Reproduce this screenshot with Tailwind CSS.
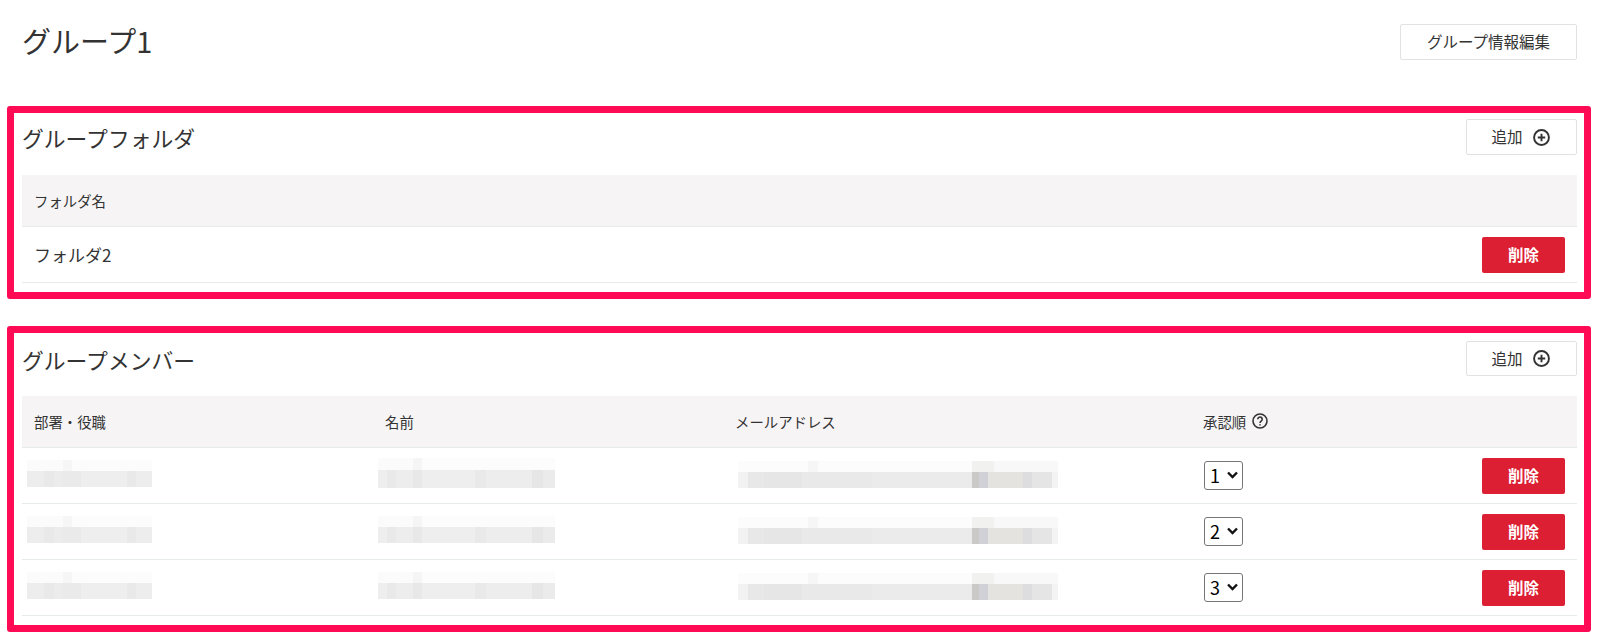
<!DOCTYPE html>
<html lang="ja">
<head>
<meta charset="UTF-8">
<meta name="viewport" content="width=device-width, initial-scale=1.0">
<title>グループ1</title>
<script src="https://cdn.jsdelivr.net/npm/@tailwindcss/browser@4"></script>
</head>
<body class="bg-white text-[#333] font-['Noto_Sans_CJK_JP','Noto_Sans',sans-serif]">

<div class="w-[1600px] h-[641px] overflow-hidden pl-[7px] pr-[9px] pt-[24px]">
  <!-- page title -->
  <div class="flex justify-between items-start pl-[15px] pr-[14px] h-[82px]">
    <h1 class="text-[29px] leading-[36px] -mt-[2px]">グループ1</h1>
    <button class="w-[177px] h-[36px] bg-white border border-[#e0e2e3] rounded-[2px] text-[15.5px] leading-none">グループ情報編集</button>
  </div>

  <!-- group folder -->
  <section class="h-[193px] border-[7px] border-[#ff0a54] rounded-[3px] pl-[8px] pr-[7px] pt-[6px]">
    <div class="flex justify-between items-center h-[36px] mb-[20px]">
      <h2 class="text-[21.8px] pt-[3px]">グループフォルダ</h2>
      <button class="w-[111px] h-[36px] flex items-center justify-center gap-[10px] pr-[2px] bg-white border border-[#e0e2e3] rounded-[2px] text-[15.5px]">
        追加
        <svg class="w-[17px] h-[17px]" viewBox="0 0 16 16" fill="none" stroke="#333" stroke-width="1.8"><circle cx="8" cy="8" r="7"/><path d="M8 4.5v7M4.5 8h7"/></svg>
      </button>
    </div>
    <div class="h-[52px] bg-[#f6f4f5] border-b border-[#e6eaea] flex items-center px-[12px] text-[14.4px]">フォルダ名</div>
    <div class="h-[56px] border-b border-[#e6eaea] flex items-center justify-between pl-[12px] pr-[12px] text-[17px]">
      <span>フォルダ2</span>
      <button class="w-[83px] h-[36px] bg-[#dc1f32] rounded-[2px] text-white text-[15.5px] font-bold">削除</button>
    </div>
  </section>

  <!-- group members -->
  <section class="mt-[27px] h-[306px] border-[7px] border-[#ff0a54] rounded-[3px] pl-[8px] pr-[7px] pt-[8px]">
    <div class="flex justify-between items-center h-[35px] mb-[20px]">
      <h2 class="text-[21.8px] pt-[3px]">グループメンバー</h2>
      <button class="w-[111px] h-[35px] flex items-center justify-center gap-[10px] pr-[2px] bg-white border border-[#e0e2e3] rounded-[2px] text-[15.5px]">
        追加
        <svg class="w-[17px] h-[17px]" viewBox="0 0 16 16" fill="none" stroke="#333" stroke-width="1.8"><circle cx="8" cy="8" r="7"/><path d="M8 4.5v7M4.5 8h7"/></svg>
      </button>
    </div>

    <div class="h-[52px] bg-[#f6f4f5] border-b border-[#e6eaea] grid grid-cols-[351px_350px_468px_1fr] items-center text-[14.4px]">
      <div class="pl-[12px]">部署・役職</div>
      <div class="pl-[12px]">名前</div>
      <div class="pl-[12px]">メールアドレス</div>
      <div class="pl-[12px] flex items-center gap-[6px]">
        承認順
        <svg class="w-[16px] h-[16px]" viewBox="0 0 16 16" fill="none" stroke="#333" stroke-width="1.6"><circle cx="8" cy="8" r="7"/><path d="M5.8 6.3a2.2 2.2 0 1 1 3.4 1.8c-.8.5-1.2.9-1.2 1.8"/><path d="M8 11.2v1.3"/></svg>
      </div>
    </div>

    <div class="h-[56px] border-b border-[#e6eaea] grid grid-cols-[351px_350px_468px_1fr] items-center">
      <div class="pl-[5px] pb-[5px]">
        <div class="w-[125px] h-[11px] bg-[linear-gradient(90deg,#fbfbfb_0_29%,#f6f6f6_29%_36%,#fcfcfc_36%)]"></div>
        <div class="w-[125px] h-[16px] bg-[linear-gradient(90deg,#ededed_0_14%,#e9e9e9_14%_22%,#ececec_22%_29%,#eaeaea_29%_43%,#eeeeee_43%_80%,#e9e9e9_80%_87%,#ededed_87%)]"></div>
      </div>
      <div class="pl-[5px] pb-[5px]">
        <div class="w-[177px] h-[12px] bg-[linear-gradient(90deg,#fbfbfb_0_20%,#f5f5f5_20%_25%,#fcfcfc_25%)]"></div>
        <div class="w-[177px] h-[18px] bg-[linear-gradient(90deg,#eeeeee_0_5%,#e9e9e9_5%_10%,#ededed_10%_20%,#e8e8e8_20%_25%,#eeeeee_25%_55%,#e9e9e9_55%_61%,#ededed_61%_87%,#e6e6e6_87%_93%,#ebebeb_93%)]"></div>
      </div>
      <div class="ml-[15px] pb-[3px]">
        <div class="w-[320px] h-[11px] bg-[linear-gradient(90deg,#fcfcfc_0_22%,#f6f6f6_22%_25%,#fcfcfc_25%_73%,#f1f1f0_73%_80%,#f8f8f8_80%)]"></div>
        <div class="w-[320px] h-[16px] bg-[linear-gradient(90deg,#f2f2f2_0_3%,#e8e8e8_3%_8%,#e6e6e6_8%_20%,#e9e9e9_20%_42%,#ebebeb_42%_73%,#cbc9c7_73%_75.4%,#d0d1d6_75.4%_78%,#e5e3e0_78%_89%,#dddde0_89%_92%,#e5e5e5_92%_98%,#f3f3f3_98%)]"></div>
      </div>
      <div class="flex items-center justify-between pl-[13px] pr-[12px]">
        <div class="relative w-[39px] h-[29px]">
          <select class="appearance-none w-full h-full border border-[#767676] rounded-[3px] text-[18px] pl-[5px] text-black"><option>1</option><option>2</option><option>3</option></select>
          <svg class="absolute right-[5px] top-[10px] w-[11px] h-[8px] pointer-events-none" viewBox="0 0 11 8" fill="none" stroke="#111" stroke-width="2.4"><path d="M1 1.5l4.5 4.5L10 1.5"/></svg>
        </div>
        <button class="w-[83px] h-[36px] bg-[#dc1f32] rounded-[2px] text-white text-[15.5px] font-bold">削除</button>
      </div>
    </div>

    <div class="h-[56px] border-b border-[#e6eaea] grid grid-cols-[351px_350px_468px_1fr] items-center">
      <div class="pl-[5px] pb-[5px]">
        <div class="w-[125px] h-[11px] bg-[linear-gradient(90deg,#fbfbfb_0_29%,#f6f6f6_29%_36%,#fcfcfc_36%)]"></div>
        <div class="w-[125px] h-[16px] bg-[linear-gradient(90deg,#ededed_0_14%,#e9e9e9_14%_22%,#ececec_22%_29%,#eaeaea_29%_43%,#eeeeee_43%_80%,#e9e9e9_80%_87%,#ededed_87%)]"></div>
      </div>
      <div class="pl-[5px] pb-[5px]">
        <div class="w-[177px] h-[11px] bg-[linear-gradient(90deg,#fbfbfb_0_20%,#f5f5f5_20%_25%,#fcfcfc_25%)]"></div>
        <div class="w-[177px] h-[16px] bg-[linear-gradient(90deg,#eeeeee_0_5%,#e9e9e9_5%_10%,#ededed_10%_20%,#e8e8e8_20%_25%,#eeeeee_25%_55%,#e9e9e9_55%_61%,#ededed_61%_87%,#e6e6e6_87%_93%,#ebebeb_93%)]"></div>
      </div>
      <div class="ml-[15px] pb-[3px]">
        <div class="w-[320px] h-[11px] bg-[linear-gradient(90deg,#fcfcfc_0_22%,#f6f6f6_22%_25%,#fcfcfc_25%_73%,#f1f1f0_73%_80%,#f8f8f8_80%)]"></div>
        <div class="w-[320px] h-[16px] bg-[linear-gradient(90deg,#f2f2f2_0_3%,#e8e8e8_3%_8%,#e6e6e6_8%_20%,#e9e9e9_20%_42%,#ebebeb_42%_73%,#cbc9c7_73%_75.4%,#d0d1d6_75.4%_78%,#e5e3e0_78%_89%,#dddde0_89%_92%,#e5e5e5_92%_98%,#f3f3f3_98%)]"></div>
      </div>
      <div class="flex items-center justify-between pl-[13px] pr-[12px]">
        <div class="relative w-[39px] h-[29px]">
          <select class="appearance-none w-full h-full border border-[#767676] rounded-[3px] text-[18px] pl-[5px] text-black"><option>2</option><option>1</option><option>3</option></select>
          <svg class="absolute right-[5px] top-[10px] w-[11px] h-[8px] pointer-events-none" viewBox="0 0 11 8" fill="none" stroke="#111" stroke-width="2.4"><path d="M1 1.5l4.5 4.5L10 1.5"/></svg>
        </div>
        <button class="w-[83px] h-[36px] bg-[#dc1f32] rounded-[2px] text-white text-[15.5px] font-bold">削除</button>
      </div>
    </div>

    <div class="h-[56px] border-b border-[#e6eaea] grid grid-cols-[351px_350px_468px_1fr] items-center">
      <div class="pl-[5px] pb-[5px]">
        <div class="w-[125px] h-[11px] bg-[linear-gradient(90deg,#fbfbfb_0_29%,#f6f6f6_29%_36%,#fcfcfc_36%)]"></div>
        <div class="w-[125px] h-[16px] bg-[linear-gradient(90deg,#ededed_0_14%,#e9e9e9_14%_22%,#ececec_22%_29%,#eaeaea_29%_43%,#eeeeee_43%_80%,#e9e9e9_80%_87%,#ededed_87%)]"></div>
      </div>
      <div class="pl-[5px] pb-[5px]">
        <div class="w-[177px] h-[11px] bg-[linear-gradient(90deg,#fbfbfb_0_20%,#f5f5f5_20%_25%,#fcfcfc_25%)]"></div>
        <div class="w-[177px] h-[16px] bg-[linear-gradient(90deg,#eeeeee_0_5%,#e9e9e9_5%_10%,#ededed_10%_20%,#e8e8e8_20%_25%,#eeeeee_25%_55%,#e9e9e9_55%_61%,#ededed_61%_87%,#e6e6e6_87%_93%,#ebebeb_93%)]"></div>
      </div>
      <div class="ml-[15px] pb-[3px]">
        <div class="w-[320px] h-[11px] bg-[linear-gradient(90deg,#fcfcfc_0_22%,#f6f6f6_22%_25%,#fcfcfc_25%_73%,#f1f1f0_73%_80%,#f8f8f8_80%)]"></div>
        <div class="w-[320px] h-[16px] bg-[linear-gradient(90deg,#f2f2f2_0_3%,#e8e8e8_3%_8%,#e6e6e6_8%_20%,#e9e9e9_20%_42%,#ebebeb_42%_73%,#cbc9c7_73%_75.4%,#d0d1d6_75.4%_78%,#e5e3e0_78%_89%,#dddde0_89%_92%,#e5e5e5_92%_98%,#f3f3f3_98%)]"></div>
      </div>
      <div class="flex items-center justify-between pl-[13px] pr-[12px]">
        <div class="relative w-[39px] h-[29px]">
          <select class="appearance-none w-full h-full border border-[#767676] rounded-[3px] text-[18px] pl-[5px] text-black"><option>3</option><option>1</option><option>2</option></select>
          <svg class="absolute right-[5px] top-[10px] w-[11px] h-[8px] pointer-events-none" viewBox="0 0 11 8" fill="none" stroke="#111" stroke-width="2.4"><path d="M1 1.5l4.5 4.5L10 1.5"/></svg>
        </div>
        <button class="w-[83px] h-[36px] bg-[#dc1f32] rounded-[2px] text-white text-[15.5px] font-bold">削除</button>
      </div>
    </div>
  </section>
</div>

</body>
</html>
